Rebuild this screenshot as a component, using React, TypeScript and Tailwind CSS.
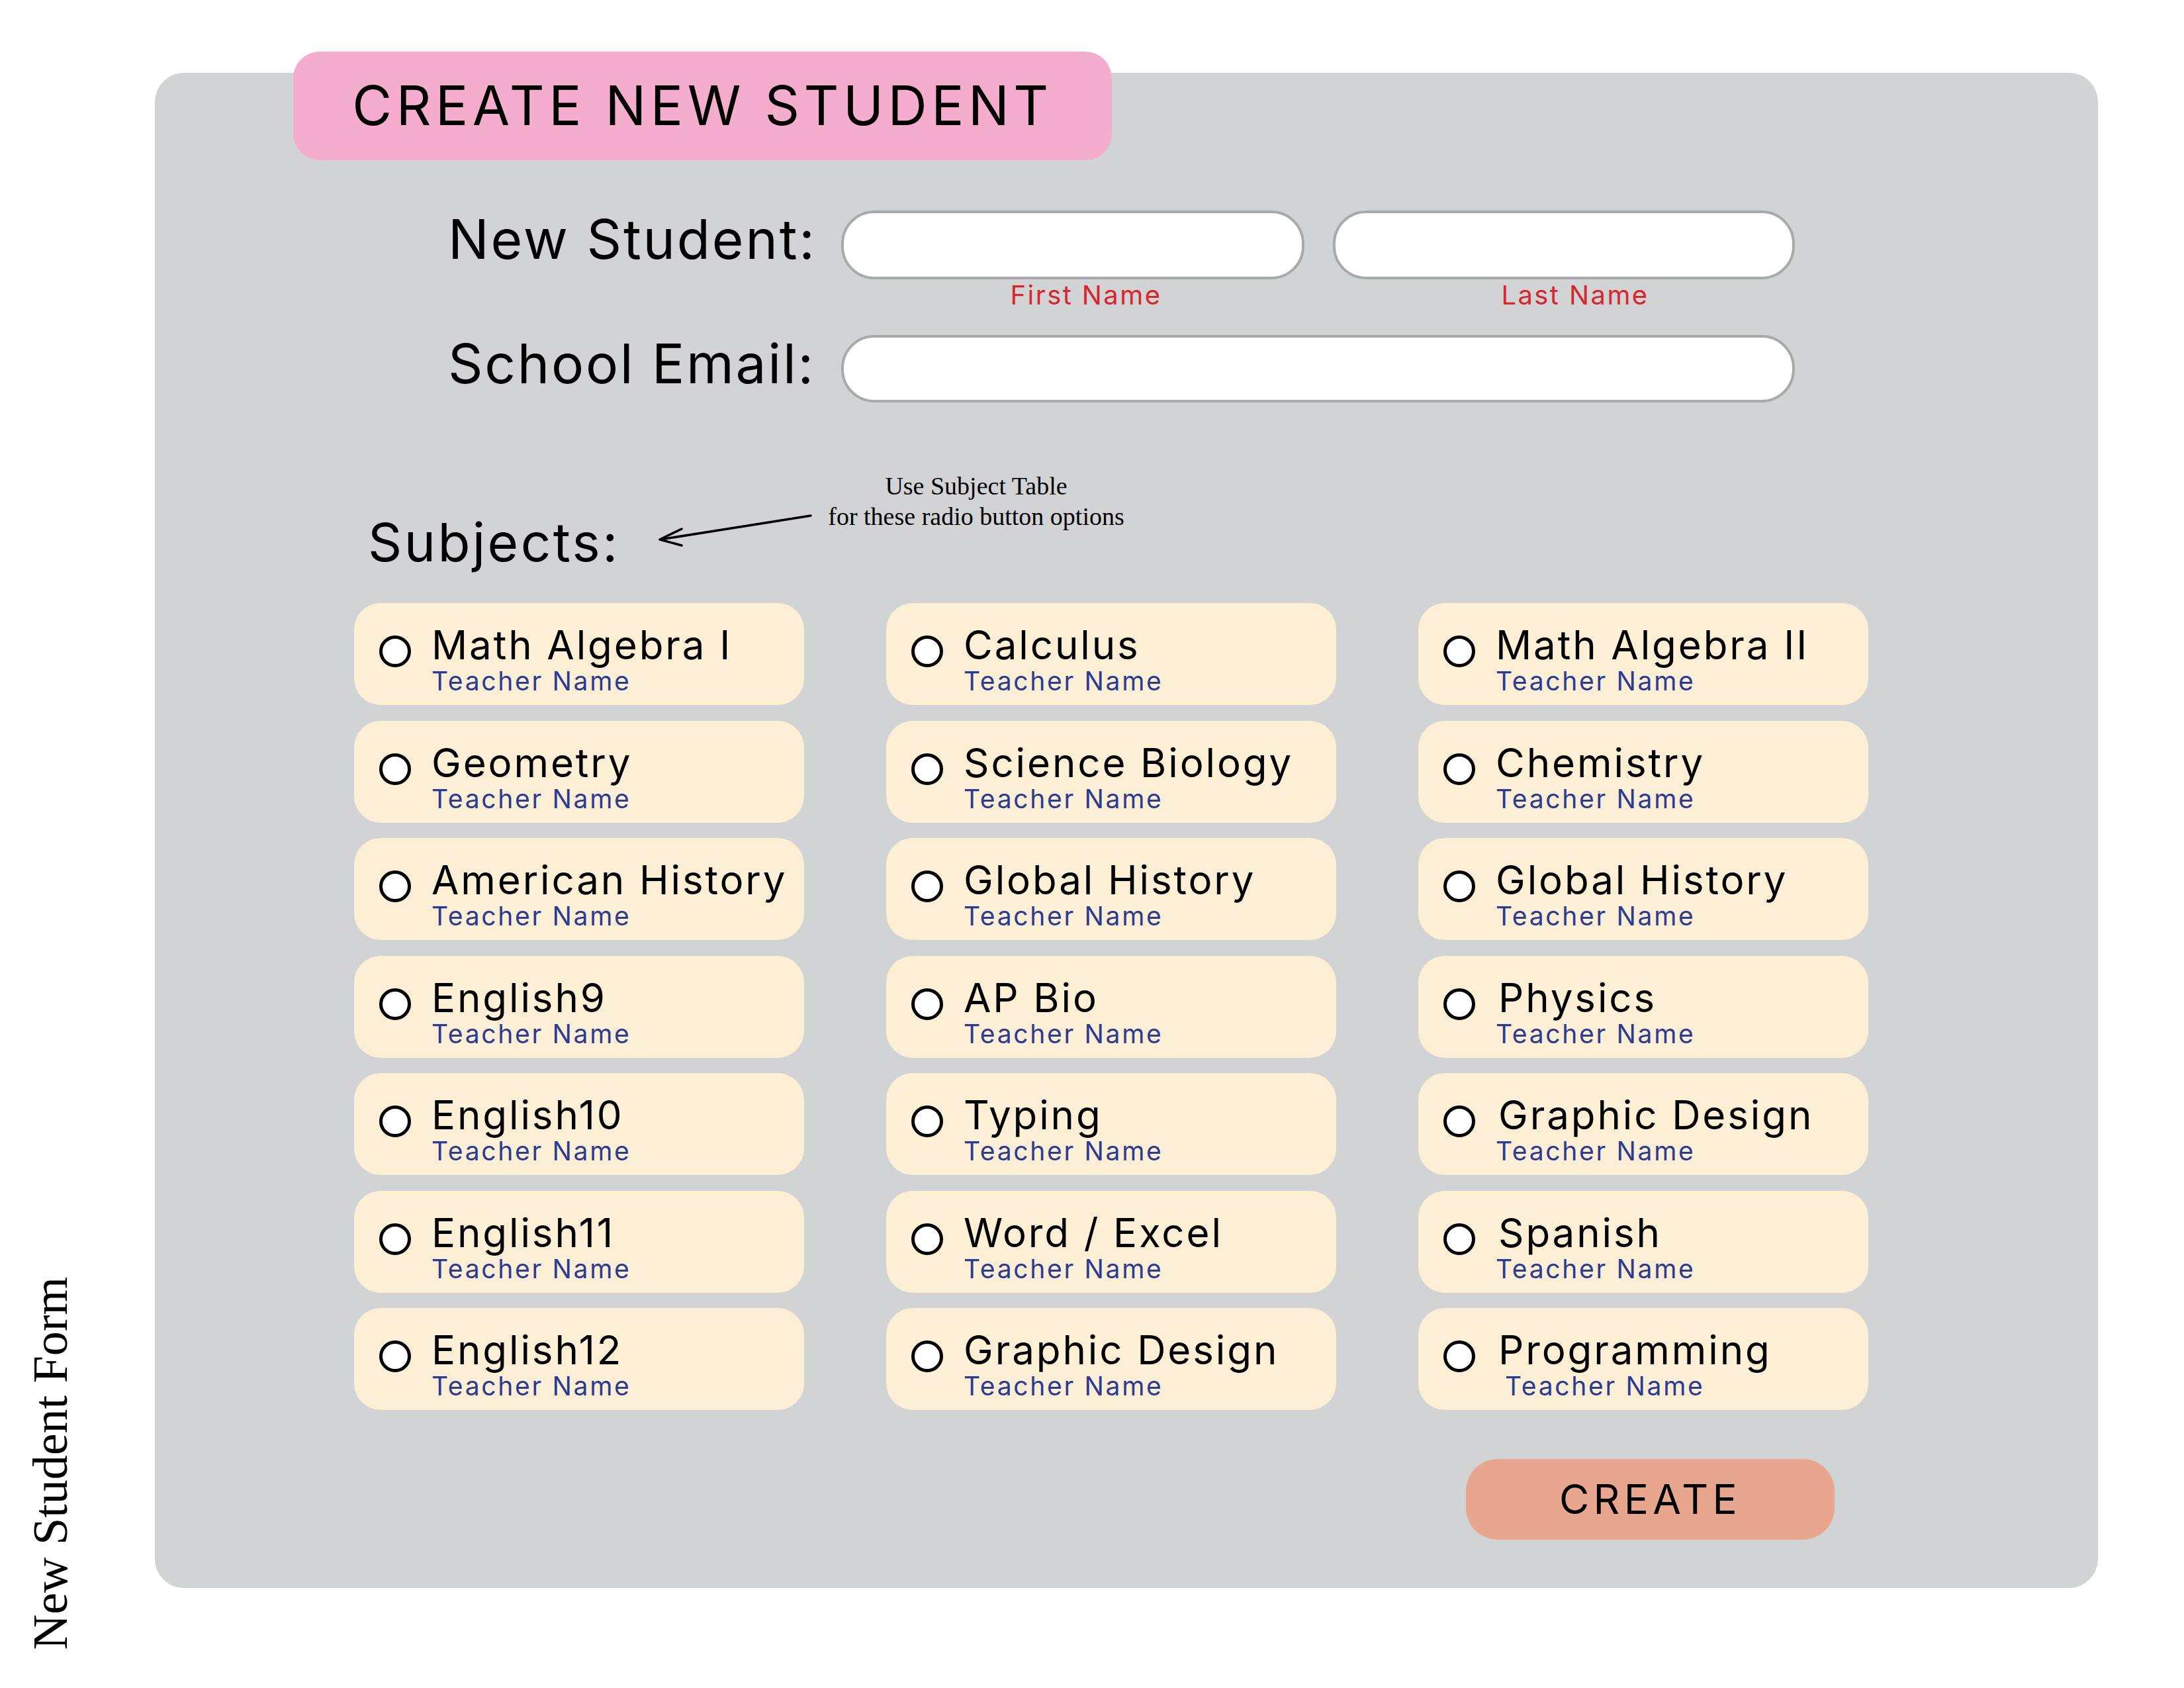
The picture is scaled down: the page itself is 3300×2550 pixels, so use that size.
import React from "react";

type Subject = { name: string; nameShift?: number; teacherShift?: number };

const rows: Subject[][] = [
  [{ name: "Math Algebra I" }, { name: "Calculus" }, { name: "Math Algebra II" }],
  [{ name: "Geometry" }, { name: "Science Biology" }, { name: "Chemistry" }],
  [{ name: "American History" }, { name: "Global History" }, { name: "Global History" }],
  [{ name: "English9" }, { name: "AP Bio" }, { name: "Physics", nameShift: 4 }],
  [{ name: "English10" }, { name: "Typing" }, { name: "Graphic Design", nameShift: 4 }],
  [{ name: "English11" }, { name: "Word / Excel" }, { name: "Spanish", nameShift: 4 }],
  [{ name: "English12" }, { name: "Graphic Design" }, { name: "Programming", nameShift: 4, teacherShift: 14 }],
];

function SubjectCard({ s }: { s: Subject }) {
  return (
    <div className="h-[154px] w-[680px] rounded-[40px] bg-[#fdeed6] flex items-start pl-[38px] pt-[33px]">
      <div className="mt-[16px] h-[48px] w-[48px] shrink-0 rounded-full border-[5px] border-black bg-white" />
      <div className="ml-[31px] flex flex-col">
        <div
          className="text-[60px] leading-[60px] tracking-[2.9px] text-black whitespace-nowrap"
          style={{ marginLeft: s.nameShift ?? 0 }}
        >
          {s.name}
        </div>
        <div
          className="mt-[5px] text-[39px] leading-[40px] tracking-[2.7px] text-[#2b3b91] whitespace-nowrap"
          style={{ marginLeft: s.teacherShift ?? 0 }}
        >
          Teacher Name
        </div>
      </div>
    </div>
  );
}

export default function App() {
  return (
    <div className="w-[3300px] h-[2550px] bg-white flex [font-family:Inter,sans-serif]">
      <div className="w-[234px] h-full flex flex-col justify-end pb-[58px] pl-[40px]">
        <div className="[writing-mode:vertical-rl] rotate-180 [font-family:'Liberation_Serif',serif] text-[74px] leading-[73px] text-black whitespace-nowrap">
          New Student Form
        </div>
      </div>

      <div className="mt-[110px] w-[2936px] h-[2289px] rounded-[44px] bg-[#d1d3d4] flex flex-col">
        {/* Header */}
        <div className="-mt-[32px] ml-[209px] w-[1237px] h-[164px] rounded-[40px] bg-[#f5adcd] flex items-center justify-center">
          <span className="text-[82px] leading-none tracking-[6.5px] text-black whitespace-nowrap">CREATE NEW STUDENT</span>
        </div>

        {/* Name row */}
        <div className="mt-[76px] ml-[443px] flex items-start">
          <div className="w-[594px] mt-[3px] text-[82px] leading-[82px] tracking-[2.8px] text-black whitespace-nowrap">New Student:</div>
          <div className="flex flex-col w-[700px]">
            <div className="h-[104px] rounded-[50px] border-4 border-[#a7a9ac] bg-white" />
            <div className="mt-[4px] pl-[40px] text-center text-[40px] leading-[40px] tracking-[2.4px] text-[#d7262e]">First Name</div>
          </div>
          <div className="ml-[43px] flex flex-col w-[698px]">
            <div className="h-[104px] rounded-[50px] border-4 border-[#a7a9ac] bg-white" />
            <div className="mt-[4px] pl-[34px] text-center text-[40px] leading-[40px] tracking-[2.4px] text-[#d7262e]">Last Name</div>
          </div>
        </div>

        {/* Email row */}
        <div className="mt-[40px] ml-[443px] flex items-start">
          <div className="w-[594px] mt-[3px] text-[82px] leading-[82px] tracking-[2.7px] text-black whitespace-nowrap">School Email:</div>
          <div className="w-[1441px] h-[102px] rounded-[50px] border-4 border-[#a7a9ac] bg-white" />
        </div>

        {/* Subjects heading with annotation */}
        <div className="mt-[108px] ml-[322px] flex items-start">
          <div className="w-[434px] mt-[63px] text-[80px] leading-[80px] tracking-[3.4px] text-black whitespace-nowrap">Subjects:</div>
          <svg className="mt-[54px] w-[240px] h-[60px]" viewBox="0 0 240 60" fill="none">
            <path d="M235 9 L8 45" stroke="black" strokeWidth="3.5" strokeLinecap="round" />
            <path d="M40 29 L7 45 L40 54" stroke="black" strokeWidth="3.5" strokeLinecap="round" strokeLinejoin="round" />
          </svg>
          <div className="-mt-[5px] w-[490px] text-center [font-family:'Liberation_Serif',serif] text-[38px] leading-[46px] text-black">
            <div>Use Subject Table</div>
            <div>for these radio button options</div>
          </div>
        </div>

        {/* Subject grid */}
        <div className="mt-[52px] ml-[301px] grid grid-cols-[680px_680px_680px] gap-x-[124px] gap-y-[23.5px]">
          {rows.map((row, ri) =>
            row.map((s, ci) => <SubjectCard key={`${ri}-${ci}`} s={s} />)
          )}
        </div>

        {/* Create button */}
        <div className="mt-[74px] ml-[1981px] w-[557px] h-[122px] rounded-[48px] bg-[#e9a68e] flex items-center justify-center">
          <span className="text-[62px] leading-none tracking-[6.3px] text-black">CREATE</span>
        </div>
      </div>
    </div>
  );
}
